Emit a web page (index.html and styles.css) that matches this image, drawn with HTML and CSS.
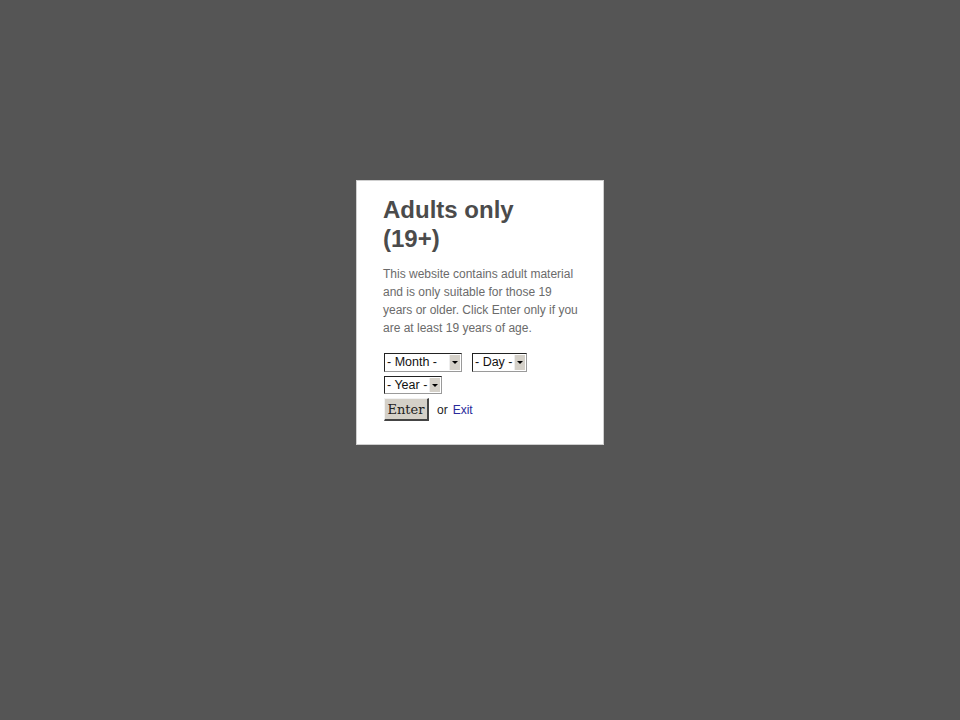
FILE: index.html
```html
<!DOCTYPE html>
<html>
<head>
<meta charset="utf-8">
<title>Adults only</title>
<link rel="stylesheet" href="styles.css">
</head>
<body>
<div class="page">
  <div class="modal">
    <h1 class="title">Adults only (19+)</h1>
    <p class="msg">This website contains adult material and is only suitable for those 19 years or older. Click Enter only if you are at least 19 years of age.</p>
    <form class="form">
      <div class="row">
        <div class="sel sel-month"><span class="sel-text">- Month -</span><span class="sel-arrow"><span class="tri"></span></span></div>
        <div class="sel sel-day"><span class="sel-text">- Day -</span><span class="sel-arrow"><span class="tri"></span></span></div>
      </div>
      <div class="row">
        <div class="sel sel-year"><span class="sel-text">- Year -</span><span class="sel-arrow"><span class="tri"></span></span></div>
      </div>
      <div class="row actions">
        <button type="button" class="enter">Enter</button>
        <span class="or">or</span>
        <a class="exit" href="#">Exit</a>
      </div>
    </form>
  </div>
</div>
</body>
</html>
```
FILE: styles.css
```css
html, body {
  margin: 0;
  padding: 0;
  background: #555555;
  height: 100%;
}
.page {
  display: flex;
  justify-content: center;
  align-items: flex-start;
  padding-top: 180px;
}
.modal {
  box-sizing: border-box;
  width: 248px;
  height: 265px;
  background: #ffffff;
  border: 1px solid #cfcfcf;
  padding: 14px 22px 20px 26px;
  font-family: "Liberation Sans", Arial, sans-serif;
}
.title {
  margin: 0;
  font-size: 24px;
  line-height: 29px;
  font-weight: bold;
  color: #4b4b4b;
  width: 150px;
}
.msg {
  margin: 12px 0 0 0;
  font-size: 12px;
  line-height: 18px;
  color: #6b6b6b;
}
.form {
  margin: 16px 0 0 1px;
  display: flex;
  flex-direction: column;
  gap: 4px;
}
.row {
  display: flex;
  align-items: center;
  gap: 10px;
}
.sel {
  box-sizing: border-box;
  height: 19px;
  display: flex;
  align-items: stretch;
  border-top: 1px solid #222;
  border-left: 1px solid #222;
  border-right: 1px solid #9a9a9a;
  border-bottom: 1px solid #9a9a9a;
  background: #fff;
  font-size: 12.5px;
  color: #111;
}
.sel-month { width: 78px; }
.sel-day { width: 55px; }
.sel-year { width: 58px; height: 18px; }
.sel-text {
  flex: 1;
  padding-left: 2px;
  line-height: 17px;
  white-space: nowrap;
  overflow: hidden;
}
.sel-arrow {
  width: 10px;
  background: #d4d0c8;
  margin: 1px 1px 1px 0;
  display: flex;
  align-items: center;
  justify-content: center;
  border-left: 1px solid #eee;
}
.tri {
  width: 0;
  height: 0;
  border-left: 3px solid transparent;
  border-right: 3px solid transparent;
  border-top: 3px solid #000;
}
.actions {
  gap: 0;
  margin-top: 0;
}
.enter {
  box-sizing: border-box;
  width: 45px;
  height: 23px;
  padding: 0;
  background: #d4d0c8;
  border-top: 1px solid #f2f2f2;
  border-left: 1px solid #f2f2f2;
  border-right: 2px solid #444;
  border-bottom: 2px solid #444;
  font-family: "DejaVu Serif", "Liberation Serif", serif;
  font-size: 13px;
  color: #222;
}
.or {
  margin-left: 8px;
  font-size: 12px;
  color: #222;
}
.exit {
  margin-left: 5px;
  font-size: 12px;
  color: #2a2a9a;
  text-decoration: none;
}
```
